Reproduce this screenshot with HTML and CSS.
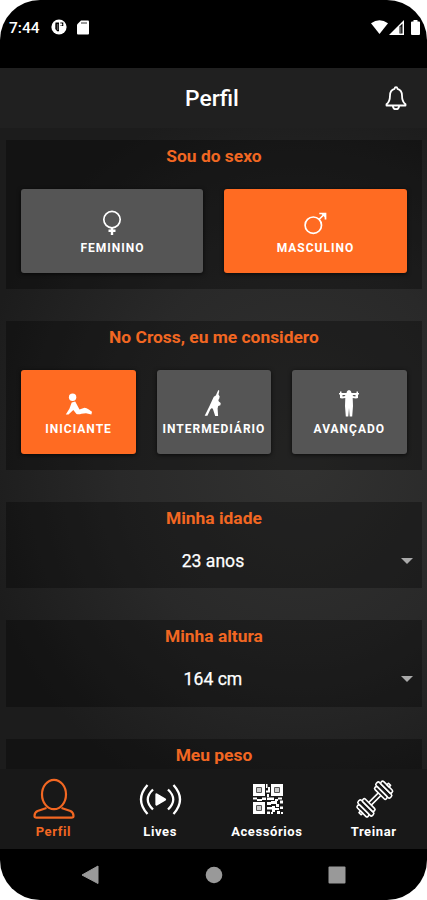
FILE: index.html
```html
<!DOCTYPE html>
<html lang="pt-BR">
<head>
<meta charset="utf-8">
<title>Perfil</title>
<link rel="stylesheet" href="styles.css">
</head>
<body>
<div class="phone">
  <div class="status">
    <span class="clock">7:44</span>
    <svg class="st-app" width="16" height="16" viewBox="0 0 16 16"><circle cx="8" cy="8" r="7.6" fill="#fff"/><path d="M4.500 3.600H8v8.600H6.200L4.300 10V5.500zM9.300 3.600h3V7h-3z" fill="#000"/><path d="M5.800 5h1.600v6H5.800z" fill="#555"/><circle cx="10" cy="5.400" r="1.200" fill="#fff"/></svg>
    <svg class="st-sd" width="12" height="15" viewBox="0 0 12 15"><path d="M4 .5h7q1 0 1 1v12q0 1-1 1H1q-1 0-1-1v-9z" fill="#fff"/><path d="M4.500 2h1v2h-1zM6.500 2h1v2h-1zM8.500 2h1v2h-1z" fill="#333"/></svg>
    <div class="st-right">
      <svg width="17" height="14" viewBox="0 0 17 14"><path d="M0 3.200Q8.500-2.800 17 3.200L8.500 14z" fill="#fff"/></svg>
      <svg width="15" height="15" viewBox="0 0 15 15"><path d="M0 15L15 0v15z" fill="#fff"/><path d="M10.500 6.500L13.500 3.500v10h-3z" fill="#000"/><path d="M11.800 6.500v7" stroke="#aaa" stroke-width=".8"/></svg>
      <svg class="st-bat" width="9" height="15" viewBox="0 0 9 15"><path d="M2.500 0h4v1.500H8q1 0 1 1V14q0 1-1 1H1q-1 0-1-1V2.500q0-1 1-1h1.500z" fill="#fff"/></svg>
    </div>
  </div>
  <header class="header">
    <h1>Perfil</h1>
    <svg class="bell" width="22" height="25" viewBox="0 0 22 25" fill="none" stroke="#fff" stroke-width="1.800" stroke-linejoin="round"><path d="M9.600 2.800q.1-1.600 1.400-1.600t1.400 1.600C16 3.700 17 6.500 17 9.500c0 5 1 7 3.500 8.800v1.200h-19v-1.200C4 16.500 5 14.500 5 9.500c0-3 1-5.800 4.600-6.700z"/><path d="M7.800 19.800q.4 3.400 3.200 3.400t3.200-3.400"/></svg>
  </header>
  <main class="content">
    <section class="card tall">
      <h2>Sou do sexo</h2>
      <div class="choices">
        <div class="choice">
          <svg width="28" height="28" viewBox="0 0 28 28" fill="none" stroke="#fff" stroke-width="1.700"><circle cx="14" cy="10.600" r="8.200"/><path d="M14 19v7M10.500 21.800h7" stroke-width="2.400"/></svg>
          <span>FEMININO</span>
        </div>
        <div class="choice on">
          <svg width="28" height="28" viewBox="0 0 28 28" fill="none" stroke="#fff" stroke-width="1.700"><circle cx="12.300" cy="16.200" r="8.200"/><path d="M18 10.500l6-6M18.300 4.500h6.200V10.500"/><path d="M20 4.500h5v5z" fill="#fff" stroke="none"/></svg>
          <span>MASCULINO</span>
        </div>
      </div>
    </section>
    <section class="card tall">
      <h2>No Cross, eu me considero</h2>
      <div class="choices">
        <div class="choice on">
          <svg width="28" height="28" viewBox="0 0 28 28" fill="#fff"><circle cx="7.600" cy="7.200" r="3.700"/><path d="M6.700 12.500l3.500-1 4.300 8 5-1.700q2 0 4.300 1.600l3.200 2.400-.6 2.600-5.400-1.200-4.500.5q-3 1.200-5 .2L8.300 20l-4.800 4.400H.8l3.600-5.600z"/></svg>
          <span>INICIANTE</span>
        </div>
        <div class="choice">
          <svg width="28" height="28" viewBox="0 0 28 28" fill="#fff"><path d="M18.300 0l1 .8-.8 3.700 1.200 2-.6 2.500-.8 1 .5 1.500 1.900 1.500-.3 2.200-2.200.8-.6 2.500.5 7.500h-2.900l-2.200-6.700-1-1.300-1.600 1.200-3 6.600H4.700L9.500 16l3-6.500 1.300-2.800 2-1.200z"/></svg>
          <span>INTERMEDIÁRIO</span>
        </div>
        <div class="choice">
          <svg width="28" height="28" viewBox="0 0 28 28" fill="#fff"><path d="M5 1.500h1.500V3h5C12 .7 13 .3 14 .3s2 .4 2.500 2.700h5V1.500H23V3h1v1.500h-1V8l-2 .6-3.300-.6.3 8-.8 10.500h-2.500L14 18l-.7 8.500h-2.500L10 16l.3-8-3.300.6L5 8V4.500H4V3h1z"/><path d="M7.500 5h3l-1 1.200-2 .2zM20.500 5h-3l1 1.200 2 .2z" fill="#555"/></svg>
          <span>AVANÇADO</span>
        </div>
      </div>
    </section>
    <section class="card short">
      <h2>Minha idade</h2>
      <div class="select"><span>23 anos</span><i class="caret"></i></div>
    </section>
    <section class="card short">
      <h2>Minha altura</h2>
      <div class="select"><span>164 cm</span><i class="caret"></i></div>
    </section>
    <section class="card short">
      <h2>Meu peso</h2>
    </section>
  </main>
  <nav class="tabs">
    <div class="tab active">
      <svg width="44" height="44" viewBox="0 0 44 44" fill="none" stroke="#f26722" stroke-width="2.200" stroke-linejoin="round"><ellipse cx="23" cy="17.500" rx="12" ry="14.600"/><path d="M15.500 31L6.500 34Q3.500 35.500 3.500 39q0 1.700 2 1.700h35q2 0 2-1.700 0-3.500-3-5L30.500 31"/></svg>
      <span>Perfil</span>
    </div>
    <div class="tab">
      <svg width="44" height="44" viewBox="0 0 44 44" fill="none" stroke="#fff" stroke-width="2.300"><path d="M9.500 8Q-3.500 22.500 9.500 37M15 12.500Q4.500 22.500 15 32.500M35.500 8Q48.500 22.500 35.500 37M30 12.500Q40.500 22.500 30 32.500"/><path d="M18.500 17.500l8.500 5-8.500 5z" fill="#fff" stroke-linejoin="round"/></svg>
      <span>Lives</span>
    </div>
    <div class="tab">
      <svg width="44" height="44" viewBox="0 0 44 44" fill="#fff"><path d="M8 7h12v12H8zM26 7h12v12H26zM8 25h12v12H8z"/><path d="M11.500 10.500h5v5h-5zM29.500 10.500h5v5h-5zM11.500 28.500h5v5h-5z" fill="#ccc" stroke="#555"/><path d="M21 7h1.500v4H21zM23 10h2v4h-2zM21 13.500h4v2h-4zM22 17h2v3h-2zM8 20.500h4v2H8zM12 22h5v2h-5zM17 20.500h4V23h-4zM22 20.500h7V23h-7zM30 22h3v2h-3zM33 20.500h4v2h-4zM35 23.500h3v3h-3zM22 25h4v3h-4zM26 24h6v3h-6zM31 27h3v3h-3zM22 30h5v2.500h-5zM27 29h3v6h-3zM30 31h4v2h-4zM35 29.500h3v2.500h-3zM22 34.500h3V37h-3zM26 35h2v2h-2zM32 34h3v3h-3zM36 35h2v2h-2z"/></svg>
      <span>Acessórios</span>
    </div>
    <div class="tab">
      <svg width="44" height="44" viewBox="0 0 44 44"><g transform="translate(.8 0) rotate(-45 22 22)" fill="#181818" stroke="#fff" stroke-width="1.600" stroke-linejoin="round"><path d="M13 20.200h18v3.600H13z"/><rect x="7" y="12" width="4.600" height="20" rx="1.800"/><rect x="11.600" y="14" width="3.600" height="16" rx="1.600"/><rect x="3.400" y="14.500" width="3.600" height="15" rx="1.600"/><path d="M1.200 20.500h2.200v3H1.200z"/><rect x="32.400" y="12" width="4.600" height="20" rx="1.800"/><rect x="28.800" y="14" width="3.600" height="16" rx="1.600"/><rect x="37" y="14.500" width="3.600" height="15" rx="1.600"/><path d="M40.600 20.500h2.200v3h-2.200z"/></g></svg>
      <span>Treinar</span>
    </div>
  </nav>
  <div class="system">
    <svg width="18" height="20" viewBox="0 0 18 20"><path d="M17 1v17.500L1 10z" fill="#999" stroke="#999" stroke-linejoin="round"/></svg>
    <svg width="18" height="18" viewBox="0 0 18 18"><circle cx="9" cy="9" r="8.300" fill="#999"/></svg>
    <svg width="18" height="18" viewBox="0 0 18 18"><rect x=".5" y=".5" width="17" height="17" rx="1" fill="#999"/></svg>
  </div>
</div>
</body>
</html>
```

FILE: styles.css
```css
* { box-sizing: border-box; }

body {
  margin: 0;
  background: #fff;
  font-family: Roboto, sans-serif;
  color: #fff;
}

svg { display: block; }

.phone {
  width: 427px;
  height: 900px;
  border-radius: 40px;
  overflow: hidden;
  background: #000;
  display: flex;
  flex-direction: column;
}

.status {
  height: 68px;
  padding: 19px 7px 0 9px;
  display: flex;
  align-items: flex-start;
}

.clock {
  font-size: 15.500px;
  font-weight: 500;
  line-height: 19px;
  width: 42px;
}

.st-sd { margin-left: 10px; margin-top: 1px; }

.st-right {
  margin-left: auto;
  padding-top: 1px;
  display: flex;
  gap: 1px;
}

.st-bat { margin-left: 6px; }

.header {
  height: 60px;
  background: #202020;
  display: grid;
  grid-template-columns: 1fr auto 1fr;
  align-items: center;
  padding: 0 20px 0 17px;
}

.header h1 {
  grid-column: 2;
  margin: 0;
  padding-top: 1px;
  font-size: 22.800px;
  font-weight: 500;
  line-height: 26px;
}

.bell { justify-self: end; }

.content {
  height: 641px;
  overflow: hidden;
  padding: 11.500px 5px 0 6.400px;
  display: flex;
  flex-direction: column;
  gap: 32px;
  background: radial-gradient(ellipse 330px 370px at 300px 330px, #323231, #292929 55%, #1c1c1c);
}

.card {
  flex: none;
  background: rgba(0, 0, 0, 0.3);
  padding: 0 15.500px 0 15px;
}

.tall { height: 149.300px; }
.short { height: 86.300px; }

.card h2 {
  margin: 0;
  padding-top: 5px;
  font-size: 17.400px;
  font-weight: 700;
  line-height: 22px;
  text-align: center;
  color: #f26722;
}

.choices {
  margin-top: 22px;
  display: flex;
  gap: 21px;
}

.choice {
  flex: 1 1 0;
  min-width: 0;
  height: 84px;
  border-radius: 3px;
  background: #555;
  box-shadow: 0 1px 4px rgba(0, 0, 0, 0.7);
  display: flex;
  flex-direction: column;
  align-items: center;
  padding-top: 20px;
}

.choice.on { background: #ff6b22; }

.choice span {
  margin-top: 4px;
  font-size: 12px;
  font-weight: 700;
  line-height: 14px;
  letter-spacing: 1px;
  white-space: nowrap;
}

.select {
  margin-top: 20px;
  height: 24px;
  display: grid;
  grid-template-columns: 1fr auto 1fr;
  align-items: center;
  font-size: 17.600px;
  -webkit-text-stroke: .25px #fff;
}

.select span { grid-column: 2; margin-right: 2px; }

.caret {
  justify-self: end;
  margin-right: -6px;
  border: 6px solid transparent;
  border-top-color: #aaa;
  border-bottom: 0;
}

.tabs {
  height: 80px;
  background: #181818;
  display: flex;
}

.tab {
  flex: 1;
  display: flex;
  flex-direction: column;
  align-items: center;
  padding-top: 8px;
  font-size: 13px;
  font-weight: 700;
  line-height: 16px;
  letter-spacing: .6px;
}

.tab span { margin-top: 3px; }

.active { color: #f26722; }

.system {
  height: 51px;
  display: flex;
  align-items: center;
  justify-content: center;
  gap: 105.500px;
}
```
